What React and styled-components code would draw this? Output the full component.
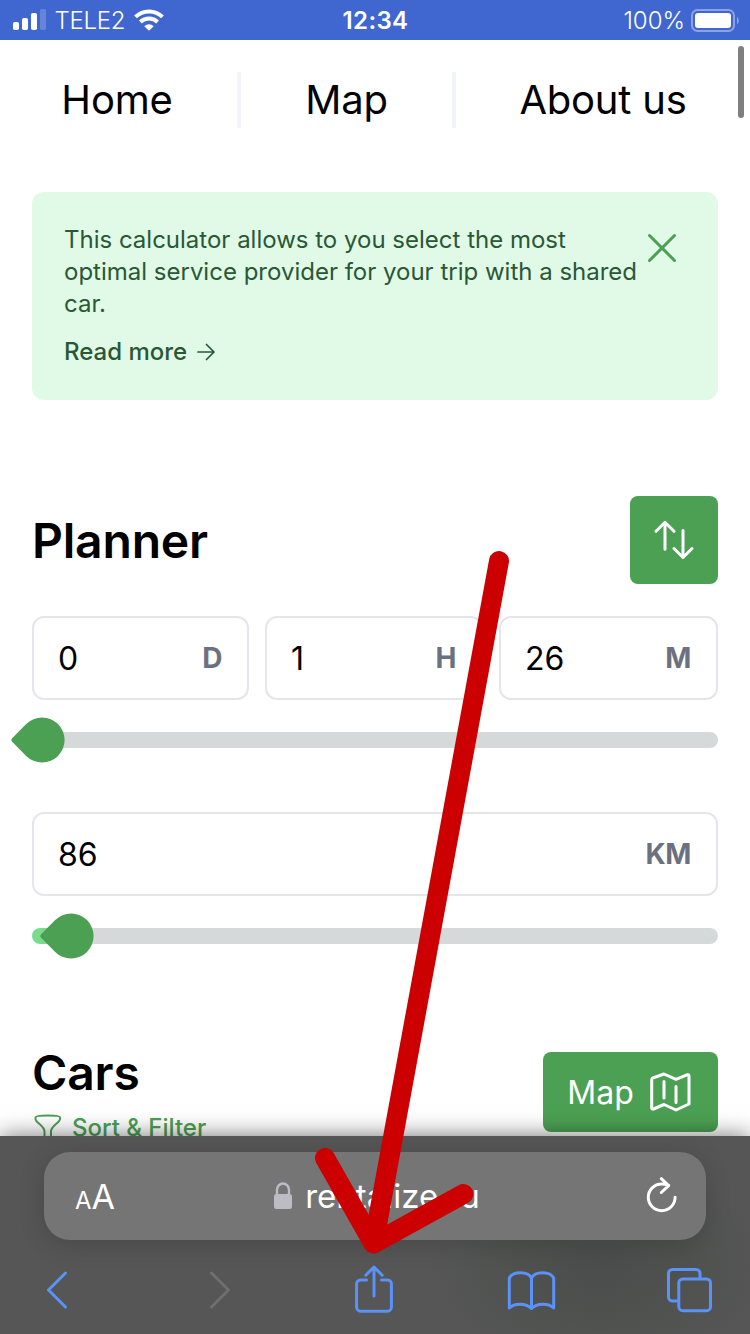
import React from "react";
import styled, { createGlobalStyle } from "styled-components";

const GlobalStyle = createGlobalStyle`
  * { box-sizing: border-box; }
  body { margin: 0; background: #fff; }
  svg { display: block; flex: none; }
  button, input { font: inherit; }
`;

const GREEN = "#4ca053";
const BLUE = "#5a92f8";

const Screen = styled.div`
  position: relative;
  display: flex;
  flex-direction: column;
  width: 750px;
  height: 1334px;
  overflow: hidden;
  background: #fff;
  color: #000;
  font-family: Inter, "Liberation Sans", sans-serif;
`;

const StatusBar = styled.header`
  display: grid;
  grid-template-columns: 1fr auto 1fr;
  align-items: center;
  height: 40px;
  padding: 0 11px 0 13px;
  background: #4066d0;
  color: #fff;
  font-size: 24px;
  line-height: 36px;
`;

const StatusGroup = styled.div`
  display: flex;
  align-items: center;
  justify-content: ${(p) => (p.$end ? "flex-end" : "flex-start")};
  gap: ${(p) => p.$gap}px;
`;

const StatusText = styled.span`
  padding-top: 2px;
  font-weight: 350;
  letter-spacing: ${(p) => p.$spacing || 0}px;
`;

const Clock = styled.time`
  padding: 2px 1px 0 0;
  font-weight: 600;
  letter-spacing: 0.4px;
`;

const Page = styled.main`
  display: flex;
  flex: 1;
  flex-direction: column;
  min-height: 0;
  overflow: hidden;
  padding: 32px 32px 0;

  & > * {
    flex-shrink: 0;
  }
`;

const Nav = styled.nav`
  display: flex;
  height: 56px;
  margin: 0 -32px;
`;

const NavLink = styled.a`
  display: flex;
  align-items: center;
  justify-content: center;
  width: ${(p) => p.$width}px;
  padding: 0 ${(p) => p.$end || 0}px 2px 0;
  border-right: ${(p) => (p.$last ? "none" : "4px solid #f1f4f9")};
  font-size: 40px;
  letter-spacing: -0.2px;
`;

const Notice = styled.section`
  display: flex;
  justify-content: space-between;
  height: 208px;
  margin-top: 64px;
  padding: 32px 40px 32px 32px;
  border-radius: 12px;
  background: #e1fae8;
  color: #2a5735;
  font-size: 24px;
  line-height: 32px;
`;

const NoticeBody = styled.div`
  display: flex;
  flex-direction: column;
  gap: 16px;
  width: 576px;
  white-space: nowrap;
`;

const NoticeText = styled.p`
  margin: 0;
`;

const ReadMore = styled.a`
  display: flex;
  align-items: center;
  gap: 10px;
  font-weight: 500;
`;

const CloseButton = styled.button`
  align-self: flex-start;
  margin-top: 8px;
  padding: 0;
  border: 0;
  background: none;
`;

const SectionHead = styled.div`
  display: flex;
  align-items: ${(p) => (p.$top ? "flex-start" : "center")};
  justify-content: space-between;
  margin-top: ${(p) => p.$gap}px;
`;

const Title = styled.h2`
  margin: 0;
  padding-top: 2px;
  font-size: 48px;
  font-weight: 600;
  line-height: 56px;
  letter-spacing: -0.2px;
`;

const GreenButton = styled.button`
  display: flex;
  align-items: center;
  justify-content: center;
  gap: 15px;
  width: ${(p) => p.$width}px;
  height: ${(p) => p.$height}px;
  padding: 0 ${(p) => p.$end || 0}px 0 0;
  border: 0;
  border-radius: 8px;
  background: ${GREEN};
  color: #fff;
  font-size: 32px;
`;

const ButtonLabel = styled.span`
  padding-top: 1px;
`;

const Fields = styled.div`
  display: grid;
  grid-template-columns: ${(p) => p.$columns};
  gap: 16px;
  margin-top: ${(p) => p.$gap}px;
`;

const Field = styled.label`
  display: flex;
  align-items: center;
  justify-content: space-between;
  height: 84px;
  padding: 0 25px 0 24px;
  border: 2px solid #e5e6eb;
  border-radius: 12px;
  font-size: 32px;
`;

const Unit = styled.span`
  color: #6b7180;
  font-size: 28px;
  font-weight: 700;
  letter-spacing: -0.4px;
`;

const Track = styled.div`
  position: relative;
  height: 16px;
  margin-top: 32px;
  border-radius: 8px;
  background: linear-gradient(to right, #7adb8c ${(p) => p.$value}px, #d5d9da ${(p) => p.$value}px);
`;

const Thumb = styled.span`
  position: absolute;
  top: -14px;
  left: ${(p) => p.$value - 22}px;
  width: 45px;
  height: 45px;
  border-radius: 3px 50% 50% 50%;
  background: ${GREEN};
  transform: translate(-0.4px, -0.5px) rotate(-45deg);
`;

const CarsHeading = styled.div`
  display: flex;
  flex-direction: column;
  gap: 11px;
  margin-top: -9px;
`;

const FilterLink = styled.a`
  display: flex;
  align-items: center;
  gap: 10px;
  padding-left: 2px;
  color: ${GREEN};
  font-size: 24px;
  font-weight: 500;
  line-height: 32px;
`;

const Chrome = styled.footer`
  position: relative;
  display: flex;
  flex-direction: column;
  height: 198px;
  padding: 16px 44px 0;
  background: radial-gradient(ellipse 170px 110px at 600px 130px, #4a4d4b, #4a4d4b00), #555655;
  box-shadow: 0 0 22px rgba(0, 0, 0, 0.55);
`;

const AddressBar = styled.div`
  display: grid;
  grid-template-columns: 1fr auto 1fr;
  align-items: center;
  height: 88px;
  padding: 0 28px 0 31px;
  border-radius: 26px;
  background: #747574;
  box-shadow: 0 4px 26px rgba(0, 0, 0, 0.16);
  color: #fff;
`;

const TextSize = styled.span`
  display: flex;
  align-items: baseline;
  padding-top: 6px;
  font-size: 24px;
  line-height: 40px;
`;

const LargeLetter = styled.span`
  font-size: 34px;
`;

const Address = styled.div`
  display: flex;
  align-items: center;
  gap: 12px;
  font-size: 33px;
`;

const Reload = styled.div`
  display: flex;
  justify-content: flex-end;
`;

const Toolbar = styled.div`
  display: flex;
  align-items: center;
  justify-content: space-between;
  height: 50px;
  margin: 25px -9px 0 -13px;
`;

const ToolButton = styled.button`
  display: flex;
  justify-content: center;
  width: 50px;
  padding: 0 0 0 ${(p) => p.$shift || 0}px;
  border: 0;
  background: none;
`;

const Scrollbar = styled.div`
  position: absolute;
  top: 46px;
  right: 6px;
  width: 6px;
  height: 72px;
  border-radius: 3px;
  background: #7f7f7f;
`;

const Annotation = styled.svg`
  position: absolute;
  inset: 0;
  pointer-events: none;
`;

const Icon = ({ w, h, box, color = "currentColor", stroke = 3, children }) => (
  <svg width={w} height={h} viewBox={box || `0 0 ${w} ${h}`} fill="none" stroke={color}
    strokeWidth={stroke} strokeLinecap="round" strokeLinejoin="round">
    {children}
  </svg>
);

const Signal = () => (
  <svg width="33" height="22" viewBox="0 0 33 22" fill="#fff">
    <rect x="0" y="13" width="6" height="8" rx="1.8" />
    <rect x="9" y="9" width="6" height="12" rx="1.8" />
    <rect x="18" y="4" width="6" height="17" rx="1.8" />
    <rect x="27" y="0" width="6" height="21" rx="1.8" opacity=".2" />
  </svg>
);

const Wifi = () => (
  <svg width="30" height="22" viewBox="0 0 30 22" fill="none" stroke="#fff" strokeWidth="4">
    <path d="M1.500 7.900A19.300 19.300 0 0 1 28.500 7.900" />
    <path d="M6.400 13A12.300 12.300 0 0 1 23.600 13" />
    <path d="M15 21.800l-4.700-4.600a6.800 6.800 0 0 1 9.400 0z" fill="#fff" stroke="none" />
  </svg>
);

const Battery = () => (
  <svg width="48" height="23" viewBox="0 0 48 23" fill="none">
    <rect x="1" y="1" width="42" height="21" rx="5.5" stroke="#fff" strokeOpacity=".4" strokeWidth="2" />
    <rect x="4" y="4" width="36" height="15" rx="3" fill="#fff" />
    <path d="M46 8c2.2 1 2.2 6 0 7z" fill="#fff" fillOpacity=".45" />
  </svg>
);

const MapButton = () => (
  <GreenButton $width={175} $height={80} $end={3}>
    <ButtonLabel>Map</ButtonLabel>
    <Icon w={42} h={42} box="649 1071 42 42">
      <path d="M651.700 1079.500q0-1 1-1.500L664 1074l12 5.300 11-4.500q2-.6 2 1.200v28L676 1110l-12-5.500-10.500 4.500q-1.800.5-1.800-1.200zM664 1081.500v16.500M676 1086.500v16" />
    </Icon>
  </GreenButton>
);

export default function App() {
  return (
    <Screen>
      <GlobalStyle />
      <StatusBar>
        <StatusGroup $gap={8.5}>
          <Signal />
          <StatusText $spacing={-0.3}>TELE2</StatusText>
          <Wifi />
        </StatusGroup>
        <Clock>12:34</Clock>
        <StatusGroup $gap={6} $end>
          <StatusText>100%</StatusText>
          <Battery />
        </StatusGroup>
      </StatusBar>

      <Page>
        <Nav>
          <NavLink $width={241} $end={3}>Home</NavLink>
          <NavLink $width={215}>Map</NavLink>
          <NavLink $width={294} $last>About us</NavLink>
        </Nav>

        <Notice>
          <NoticeBody>
            <NoticeText>
              This calculator allows to you select the most<br />
              optimal service provider for your trip with a shared<br />
              car.
            </NoticeText>
            <ReadMore>
              Read more
              <Icon w={18} h={18} stroke={1.7}>
                <path d="M1 9h16M9.500 1.500L17 9l-7.500 7.500" />
              </Icon>
            </ReadMore>
          </NoticeBody>
          <CloseButton aria-label="Close">
            <Icon w={32} h={32} color={GREEN}>
              <path d="M3.500 3.500l25 25M28.500 3.500l-25 25" />
            </Icon>
          </CloseButton>
        </Notice>

        <SectionHead $gap={96}>
          <Title>Planner</Title>
          <GreenButton $width={88} $height={88} aria-label="Swap">
            <Icon w={44} h={44} stroke={3}>
              <path d="M13 31.300V4.300M4 13.300L13 4.300l9 9M31 12.500V39.500M22 30.500l9 9 9-9" />
            </Icon>
          </GreenButton>
        </SectionHead>

        <Fields $columns="217px 218px 219px" $gap={32}>
          <Field>0<Unit>D</Unit></Field>
          <Field>1<Unit>H</Unit></Field>
          <Field>26<Unit>M</Unit></Field>
        </Fields>
        <Track $value={0}><Thumb $value={10} /></Track>

        <Fields $columns="1fr" $gap={64}>
          <Field>86<Unit>KM</Unit></Field>
        </Fields>
        <Track $value={30}><Thumb $value={39} /></Track>

        <SectionHead $gap={108} $top>
          <CarsHeading>
            <Title>Cars</Title>
            <FilterLink>
              <Icon w={28} h={30} stroke={2}>
                <path d="M1.500 4.500C1.500 3 7 2.500 14 2.500S26 3 26 4.500V6C26 9.500 17 13 17 18.500v6l-6.500 4V18.500C10.500 13 1.500 9.500 1.500 6z" />
              </Icon>
              Sort &amp; Filter
            </FilterLink>
          </CarsHeading>
          <MapButton />
        </SectionHead>
      </Page>

      <Chrome>
        <AddressBar>
          <TextSize>A<LargeLetter>A</LargeLetter></TextSize>
          <Address>
            <svg width="20" height="28" viewBox="0 0 20 28" fill="none">
              <path d="M4 13V8a6 6.500 0 0 1 12 0v5" stroke="#bdbbc4" strokeWidth="2.400" />
              <rect x="1" y="12" width="18" height="15" rx="2.500" fill="#bdbbc4" />
            </svg>
            rentalize.ru
          </Address>
          <Reload>
            <Icon w={32} h={38}>
              <path d="M29.100 20.300A13.400 13.400 0 1 1 15.700 6.900Q19 6.900 22.600 8.200M15.300 1.700L22.600 8.600l-7.300 6.900" />
            </Icon>
          </Reload>
        </AddressBar>
        <Toolbar>
          <ToolButton $shift={1} aria-label="Back">
            <Icon w={22} h={38} color={BLUE}><path d="M19.500 2L2.500 19l17 17" /></Icon>
          </ToolButton>
          <ToolButton $shift={10} aria-label="Forward">
            <Icon w={22} h={38} color="#6e6f6f"><path d="M2.500 2l17 17-17 17" /></Icon>
          </ToolButton>
          <ToolButton $shift={2} aria-label="Share">
            <Icon w={40} h={50} color={BLUE}>
              <path d="M12.500 15H6.600a4 4 0 0 0-4 4v23.200a4 4 0 0 0 4 4h26.800a4 4 0 0 0 4-4V19a4 4 0 0 0-4-4h-5.900M20 31V2.500M11.800 10.200L20 2l8.200 8.200" />
            </Icon>
          </ToolButton>
          <ToolButton aria-label="Bookmarks">
            <Icon w={49} h={41} color={BLUE}>
              <path d="M24.500 8C21 1 6 1 2.300 8V38C7 33 19 32.500 24.500 38.500C30 32.500 42 33 46.700 38V8C43 1 28 1 24.500 8zM24.500 8V38.500" />
            </Icon>
          </ToolButton>
          <ToolButton aria-label="Tabs">
            <Icon w={46} h={46} box="1.5 0 46 46" color={BLUE}>
              <path d="M12 34H6a4 4 0 0 1-4-4V6.500a4 4 0 0 1 4-4h23.500a4 4 0 0 1 4 4V11" transform="translate(1)" />
              <rect x="13.300" y="12" width="31.700" height="31.700" rx="4" />
            </Icon>
          </ToolButton>
        </Toolbar>
      </Chrome>

      <Scrollbar />
      <Annotation width="750" height="1334" viewBox="0 0 750 1334" fill="none" stroke="#c00"
        strokeWidth="20" strokeLinecap="round" strokeLinejoin="round">
        <path d="M499 561L373.500 1243.500M325 1158L373.500 1243.500L463.500 1194" />
      </Annotation>
    </Screen>
  );
}
